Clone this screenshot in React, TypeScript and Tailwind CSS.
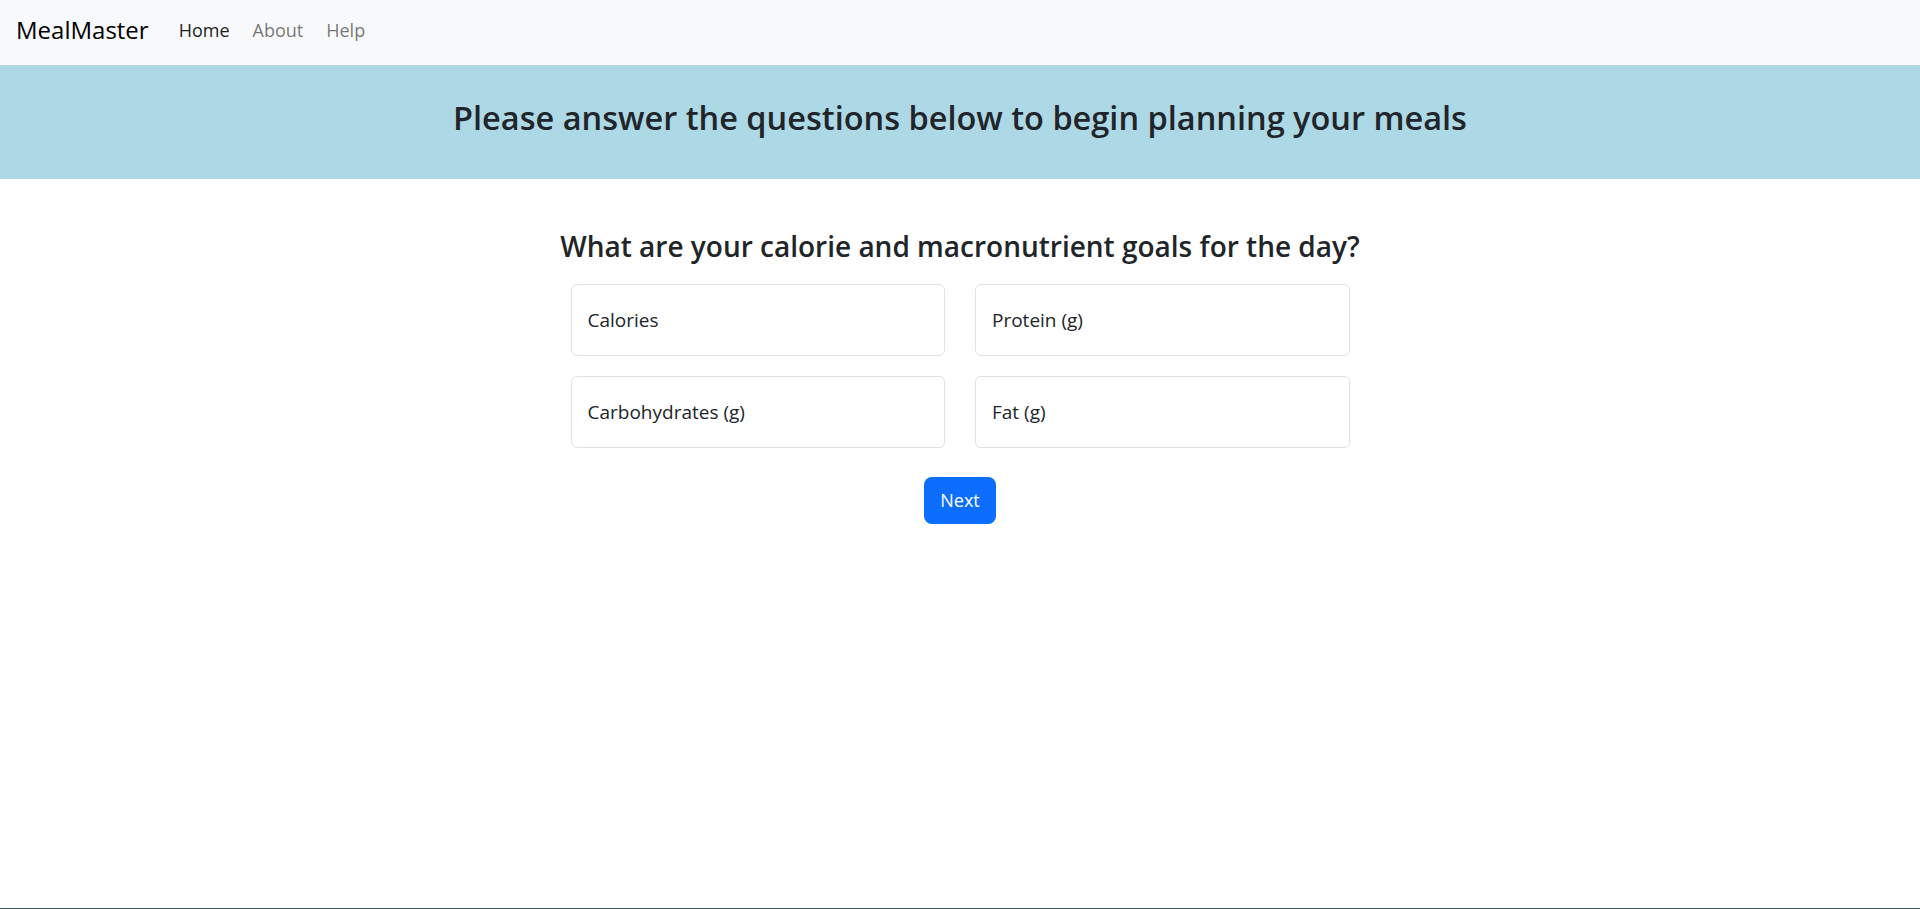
import * as React from 'react';

const font = {fontFamily: '"Open Sans", "Noto Sans", sans-serif'};

function Field({label}: {label: string}): JSX.Element {
  return (
    <div className="flex h-[72px] items-center rounded-md border border-[#dee2e6] bg-white px-4 text-[19px] text-[#212529]">
      {label}
    </div>
  );
}

export default function App(): JSX.Element {
  return (
    <div
      className="flex min-h-screen flex-col border-b border-[#405564] bg-white"
      style={font}
    >
      <nav className="flex h-[65px] items-center bg-[#f8f9fa] pb-[5px] pl-4">
        <span className="mr-[30px] text-[24px] font-medium text-black">MealMaster</span>
        <div className="flex gap-[23px] text-[18px]">
          <a className="text-black/90">Home</a>
          <a className="text-black/55">About</a>
          <a className="text-black/55">Help</a>
        </div>
      </nav>

      <header className="flex h-[114px] items-center justify-center bg-[#add8e6] pb-2">
        <h2 className="text-[32.5px] font-semibold text-[#212529]">
          Please answer the questions below to begin planning your meals
        </h2>
      </header>

      <main className="flex flex-col items-center pt-[46px]">
        <h3 className="text-[28px] font-semibold text-[#212529]">
          What are your calorie and macronutrient goals for the day?
        </h3>
        <div className="mt-[17px] grid w-[779px] grid-cols-2 gap-x-[30px] gap-y-5">
          <Field label="Calories" />
          <Field label="Protein (g)" />
          <Field label="Carbohydrates (g)" />
          <Field label="Fat (g)" />
        </div>
        <button className="mt-[29px] h-[47px] rounded-lg bg-[#0d6efd] px-4 text-[18px] text-white">
          Next
        </button>
      </main>
    </div>
  );
}
